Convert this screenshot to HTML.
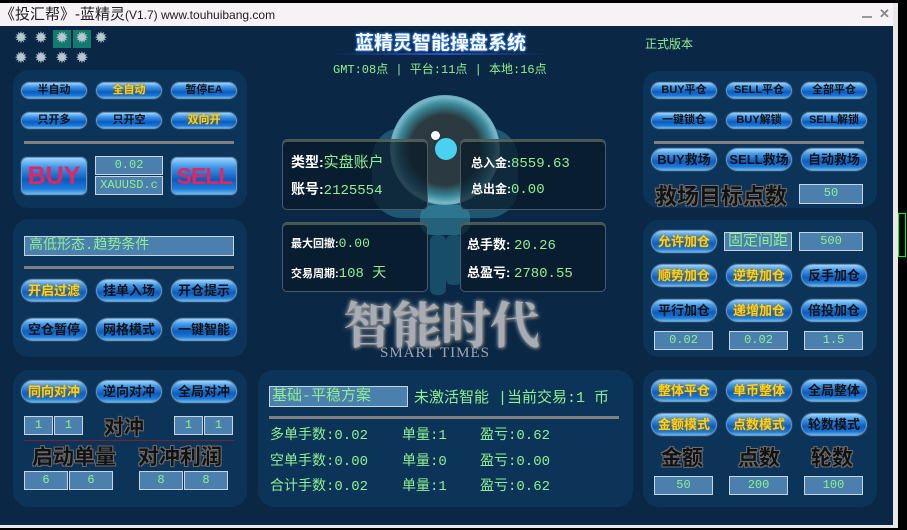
<!DOCTYPE html>
<html><head><meta charset="utf-8"><style>
*{margin:0;padding:0;box-sizing:border-box}
body{width:907px;height:530px;background:#000;position:relative;overflow:hidden;font-family:"Liberation Sans","Noto Sans CJK SC",sans-serif}
.a{position:absolute}
#win{left:0;top:3px;width:898px;height:525px;background:#e8e8e8}
#title{left:0;top:3px;width:893px;height:23px;background:#f6f2f6;font-size:15px;color:#222;line-height:23px;white-space:nowrap}
#main{left:0;top:26px;width:893px;height:499px;background:#0a2846}
.p{position:absolute;background:#0c3459;border-radius:16px}
.b{position:absolute;height:17px;width:66px;border-radius:9px;background:linear-gradient(#9fd4ff 0%,#3f98e8 25%,#0a5cc0 60%,#1c7ad8 85%,#6ab8f0 100%);border:1px solid #6e96b8;box-shadow:0 0 0 1px #21466a;font-size:11px;font-weight:bold;color:#111;text-align:center;line-height:15px;white-space:nowrap}
.b.t{height:23px;line-height:21px;font-size:13px;border-radius:12px}
.y{color:#ffd21a;text-shadow:0 0 3px #a06a00}
.f{position:absolute;background:#4a7fae;border:1px solid #c8d4e0;color:#8ff08f;font-size:12px;text-align:center;font-family:"Liberation Mono","Noto Sans CJK SC",monospace;line-height:17px;white-space:nowrap}
.sep{position:absolute;height:3px;background:#808080}
.g{color:#8ff08f;font-family:"Liberation Mono","Noto Sans CJK SC",monospace;white-space:nowrap}
.big{position:absolute;color:#111;font-weight:bold;white-space:nowrap;text-shadow:0 0 1px #999,1px 1px 0 #666,-1px -1px 0 #666,1px -1px 0 #666,-1px 1px 0 #666}
.box{position:absolute;border:1px solid #4a5a6a;border-radius:5px;background:rgba(10,25,40,0.72);box-shadow:inset 0 2px 0 rgba(200,200,120,.35)}
.w{color:#fff;font-weight:bold;white-space:nowrap}
.gear{position:absolute;width:18px;height:18px;color:#b8c8d0;font-size:16px;line-height:18px;text-align:center}
</style></head><body>
<div class="a" id="win"></div>
<div class="a" id="title">《投汇帮》-蓝精灵<span style="font-size:12px">(V1.7) www.touhuibang.com</span></div>
<div class="a" style="left:862px;top:16px;width:10px;height:2px;background:#999"></div>
<div class="a" style="left:879px;top:6px;font-size:13px;color:#888;font-weight:bold">✕</div>
<div class="a" id="main"></div>
<div class="a" style="left:898px;top:0;width:9px;height:530px;background:#000"></div>
<div class="a" style="left:898px;top:213px;width:8px;height:44px;border:1px solid #0f0"></div>
<div class="a" style="left:0;top:0;width:907px;height:3px;background:#000"></div>

<div class="gear" style="left:12px;top:30px">✹</div><div class="gear" style="left:32px;top:30px">✹</div>
<div class="gear" style="left:53px;top:30px;background:#147a70">✹</div><div class="gear" style="left:73px;top:30px;background:#147a70">✹</div>
<div class="gear" style="left:92px;top:30px">✹</div>
<div class="gear" style="left:12px;top:50px">✹</div><div class="gear" style="left:32px;top:50px">✹</div><div class="gear" style="left:53px;top:50px">✹</div><div class="gear" style="left:73px;top:50px">✹</div>

<div class="p" style="left:13px;top:70px;width:234px;height:138px"></div>
<div class="b" style="left:21px;top:82px">半自动</div><div class="b y" style="left:96px;top:82px">全自动</div><div class="b" style="left:171px;top:82px">暂停EA</div>
<div class="b" style="left:21px;top:112px">只开多</div><div class="b" style="left:96px;top:112px">只开空</div><div class="b y" style="left:171px;top:112px">双向开</div>
<div class="sep" style="left:24px;top:141px;width:210px"></div>
<div class="b" style="left:21px;top:157px;width:66px;height:38px;border-radius:6px;font-size:25px;line-height:36px;color:#e8245a;font-weight:bold">BUY</div>
<div class="f" style="left:95px;top:156px;width:68px;height:19px">0.02</div>
<div class="f" style="left:95px;top:176px;width:68px;height:19px">XAUUSD.c</div>
<div class="b" style="left:171px;top:157px;width:66px;height:38px;border-radius:6px;font-size:23px;line-height:36px;color:#e8245a;font-weight:bold;letter-spacing:-1px">SELL</div>

<div class="p" style="left:13px;top:219px;width:234px;height:138px"></div>
<div class="f" style="left:24px;top:236px;width:210px;height:20px;text-align:left;padding-left:4px;font-size:14px;line-height:18px">高低形态.趋势条件</div>
<div class="sep" style="left:24px;top:266px;width:210px"></div>
<div class="b t y" style="left:21px;top:279px">开启过滤</div><div class="b t" style="left:96px;top:279px">挂单入场</div><div class="b t" style="left:171px;top:279px">开仓提示</div>
<div class="b t" style="left:21px;top:318px">空仓暂停</div><div class="b t" style="left:96px;top:318px">网格模式</div><div class="b t" style="left:171px;top:318px">一键智能</div>

<div class="p" style="left:13px;top:370px;width:234px;height:137px"></div>
<div class="b t y" style="left:21px;top:380px">同向对冲</div><div class="b t" style="left:96px;top:380px">逆向对冲</div><div class="b t" style="left:171px;top:380px">全局对冲</div>
<div class="f" style="left:24px;top:416px;width:29px;height:19px">1</div><div class="f" style="left:54px;top:416px;width:29px;height:19px">1</div>
<div class="big" style="left:104px;top:411px;font-size:20px">对冲</div>
<div class="f" style="left:174px;top:416px;width:29px;height:19px">1</div><div class="f" style="left:204px;top:416px;width:29px;height:19px">1</div>
<div class="a" style="left:24px;top:440px;width:210px;height:1px;background:#7a2030"></div>
<div class="big" style="left:32px;top:441px;font-size:21px">启动单量</div>
<div class="big" style="left:138px;top:441px;font-size:21px">对冲利润</div>
<div class="f" style="left:24px;top:471px;width:44px;height:19px">6</div><div class="f" style="left:69px;top:471px;width:44px;height:19px">6</div>
<div class="f" style="left:139px;top:471px;width:44px;height:19px">8</div><div class="f" style="left:184px;top:471px;width:44px;height:19px">8</div>

<div class="a w" style="left:355px;top:28px;font-size:19px;text-shadow:0 0 3px #3a8aff,0 0 2px #3a8aff">蓝精灵智能操盘系统</div>
<div class="a" style="left:333px;top:53px;width:215px;height:2px;background:linear-gradient(90deg,transparent,#2a50d0,transparent)"></div>
<div class="a g" style="left:333px;top:60px;font-size:12px">GMT:08点 | 平台:11点 | 本地:16点</div>
<div class="a g" style="left:645px;top:35px;font-size:12px;font-family:'Liberation Sans','Noto Sans CJK SC',sans-serif">正式版本</div>

<div class="a" style="left:372px;top:128px;width:146px;height:90px;border-radius:30px;background:#3a90a8;opacity:.45"></div>
<div class="a" style="left:390px;top:95px;width:110px;height:110px;border-radius:50%;background:radial-gradient(circle,#2a3a40 45%,#3a8a9a 60%,#7ab8c8 68%,#2a7a98 78%,#1a5a78 100%)"></div>
<div class="a" style="left:435px;top:138px;width:22px;height:22px;border-radius:50%;background:#4ad0f0"></div>
<div class="a" style="left:431px;top:131px;width:9px;height:9px;border-radius:50%;background:#fff"></div>
<div class="a" style="left:420px;top:205px;width:50px;height:30px;border-radius:12px;background:#3a90a8;opacity:.55"></div>
<div class="a" style="left:430px;top:235px;width:16px;height:60px;border-radius:6px;background:#2a7a90;opacity:.45"></div>
<div class="a" style="left:446px;top:235px;width:16px;height:50px;border-radius:6px;background:#2a7a90;opacity:.45"></div>

<div class="box" style="left:282px;top:139px;width:146px;height:71px"></div>
<div class="box" style="left:460px;top:139px;width:146px;height:71px"></div>
<div class="box" style="left:282px;top:222px;width:146px;height:70px"></div>
<div class="box" style="left:460px;top:222px;width:146px;height:70px"></div>
<div class="a w" style="left:291px;top:151px;font-size:14px">类型:<span class="g" style="font-weight:normal;font-size:15px">实盘账户</span></div>
<div class="a w" style="left:291px;top:179px;font-size:14px">账号:<span class="g" style="font-weight:normal;font-size:14px">2125554</span></div>
<div class="a w" style="left:471px;top:154px;font-size:12px">总入金:<span class="g" style="font-weight:normal;font-size:14px">8559.63</span></div>
<div class="a w" style="left:471px;top:180px;font-size:12px">总出金:<span class="g" style="font-weight:normal;font-size:14px">0.00</span></div>
<div class="a w" style="left:291px;top:235px;font-size:11px">最大回撤:<span class="g" style="font-weight:normal;font-size:13px">0.00</span></div>
<div class="a w" style="left:291px;top:262px;font-size:11px">交易周期:<span class="g" style="font-weight:normal;font-size:14px">108 天</span></div>
<div class="a w" style="left:467px;top:234px;font-size:13px">总手数: <span class="g" style="font-weight:normal;font-size:14px">20.26</span></div>
<div class="a w" style="left:467px;top:262px;font-size:13px">总盈亏: <span class="g" style="font-weight:normal;font-size:14px">2780.55</span></div>

<div class="a" style="left:343px;top:286px;font-size:50px;font-family:'Noto Serif CJK SC',serif;font-weight:bold;color:#a8acb4;text-shadow:0 0 4px #ddd,2px 2px 2px #333;white-space:nowrap;letter-spacing:-1px">智能时代</div>
<div class="a" style="left:380px;top:345px;font-size:15px;font-family:'Liberation Serif',serif;color:#a0a4ac;letter-spacing:1px;white-space:nowrap">SMART TIMES</div>

<div class="p" style="left:258px;top:370px;width:375px;height:137px"></div>
<div class="f" style="left:269px;top:386px;width:139px;height:21px;text-align:left;padding-left:2px;font-size:15px;line-height:19px">基础-平稳方案</div>
<div class="a g" style="left:414px;top:386px;font-size:15px">未激活智能 |当前交易:1 币</div>
<div class="sep" style="left:269px;top:416px;width:350px"></div>
<div class="a g" style="left:270px;top:424px;font-size:14px">多单手数:0.02</div><div class="a g" style="left:402px;top:424px;font-size:14px">单量:1</div><div class="a g" style="left:480px;top:424px;font-size:14px">盈亏:0.62</div>
<div class="a g" style="left:270px;top:450px;font-size:14px">空单手数:0.00</div><div class="a g" style="left:402px;top:450px;font-size:14px">单量:0</div><div class="a g" style="left:480px;top:450px;font-size:14px">盈亏:0.00</div>
<div class="a g" style="left:270px;top:475px;font-size:14px">合计手数:0.02</div><div class="a g" style="left:402px;top:475px;font-size:14px">单量:1</div><div class="a g" style="left:480px;top:475px;font-size:14px">盈亏:0.62</div>

<div class="p" style="left:643px;top:71px;width:234px;height:137px"></div>
<div class="b" style="left:651px;top:82px">BUY平仓</div><div class="b" style="left:726px;top:82px">SELL平仓</div><div class="b" style="left:801px;top:82px">全部平仓</div>
<div class="b" style="left:651px;top:112px">一键锁仓</div><div class="b" style="left:726px;top:112px">BUY解锁</div><div class="b" style="left:801px;top:112px">SELL解锁</div>
<div class="sep" style="left:654px;top:141px;width:210px"></div>
<div class="b t" style="left:651px;top:148px">BUY救场</div><div class="b t" style="left:726px;top:148px">SELL救场</div><div class="b t" style="left:801px;top:148px">自动救场</div>
<div class="big" style="left:655px;top:179px;font-size:22px">救场目标点数</div>
<div class="f" style="left:799px;top:184px;width:64px;height:20px">50</div>

<div class="p" style="left:643px;top:220px;width:234px;height:137px"></div>
<div class="b t y" style="left:651px;top:230px">允许加仓</div>
<div class="f" style="left:724px;top:232px;width:68px;height:19px;font-size:15px">固定间距</div>
<div class="f" style="left:799px;top:232px;width:64px;height:19px">500</div>
<div class="b t y" style="left:651px;top:264px">顺势加仓</div><div class="b t y" style="left:726px;top:264px">逆势加仓</div><div class="b t" style="left:801px;top:264px">反手加仓</div>
<div class="b t" style="left:651px;top:299px">平行加仓</div><div class="b t y" style="left:726px;top:299px">递增加仓</div><div class="b t" style="left:801px;top:299px">倍投加仓</div>
<div class="f" style="left:654px;top:331px;width:59px;height:19px">0.02</div>
<div class="f" style="left:729px;top:331px;width:59px;height:19px">0.02</div>
<div class="f" style="left:804px;top:331px;width:59px;height:19px">1.5</div>

<div class="p" style="left:643px;top:370px;width:234px;height:137px"></div>
<div class="b t y" style="left:651px;top:379px">整体平仓</div><div class="b t y" style="left:726px;top:379px">单币整体</div><div class="b t" style="left:801px;top:379px">全局整体</div>
<div class="b t y" style="left:651px;top:413px">金额模式</div><div class="b t y" style="left:726px;top:413px">点数模式</div><div class="b t" style="left:801px;top:413px">轮数模式</div>
<div class="big" style="left:661px;top:442px;font-size:21px">金额</div>
<div class="big" style="left:738px;top:442px;font-size:21px">点数</div>
<div class="big" style="left:811px;top:442px;font-size:21px">轮数</div>
<div class="f" style="left:654px;top:476px;width:59px;height:19px">50</div>
<div class="f" style="left:729px;top:476px;width:59px;height:19px">200</div>
<div class="f" style="left:804px;top:476px;width:59px;height:19px">100</div>
</body></html>
